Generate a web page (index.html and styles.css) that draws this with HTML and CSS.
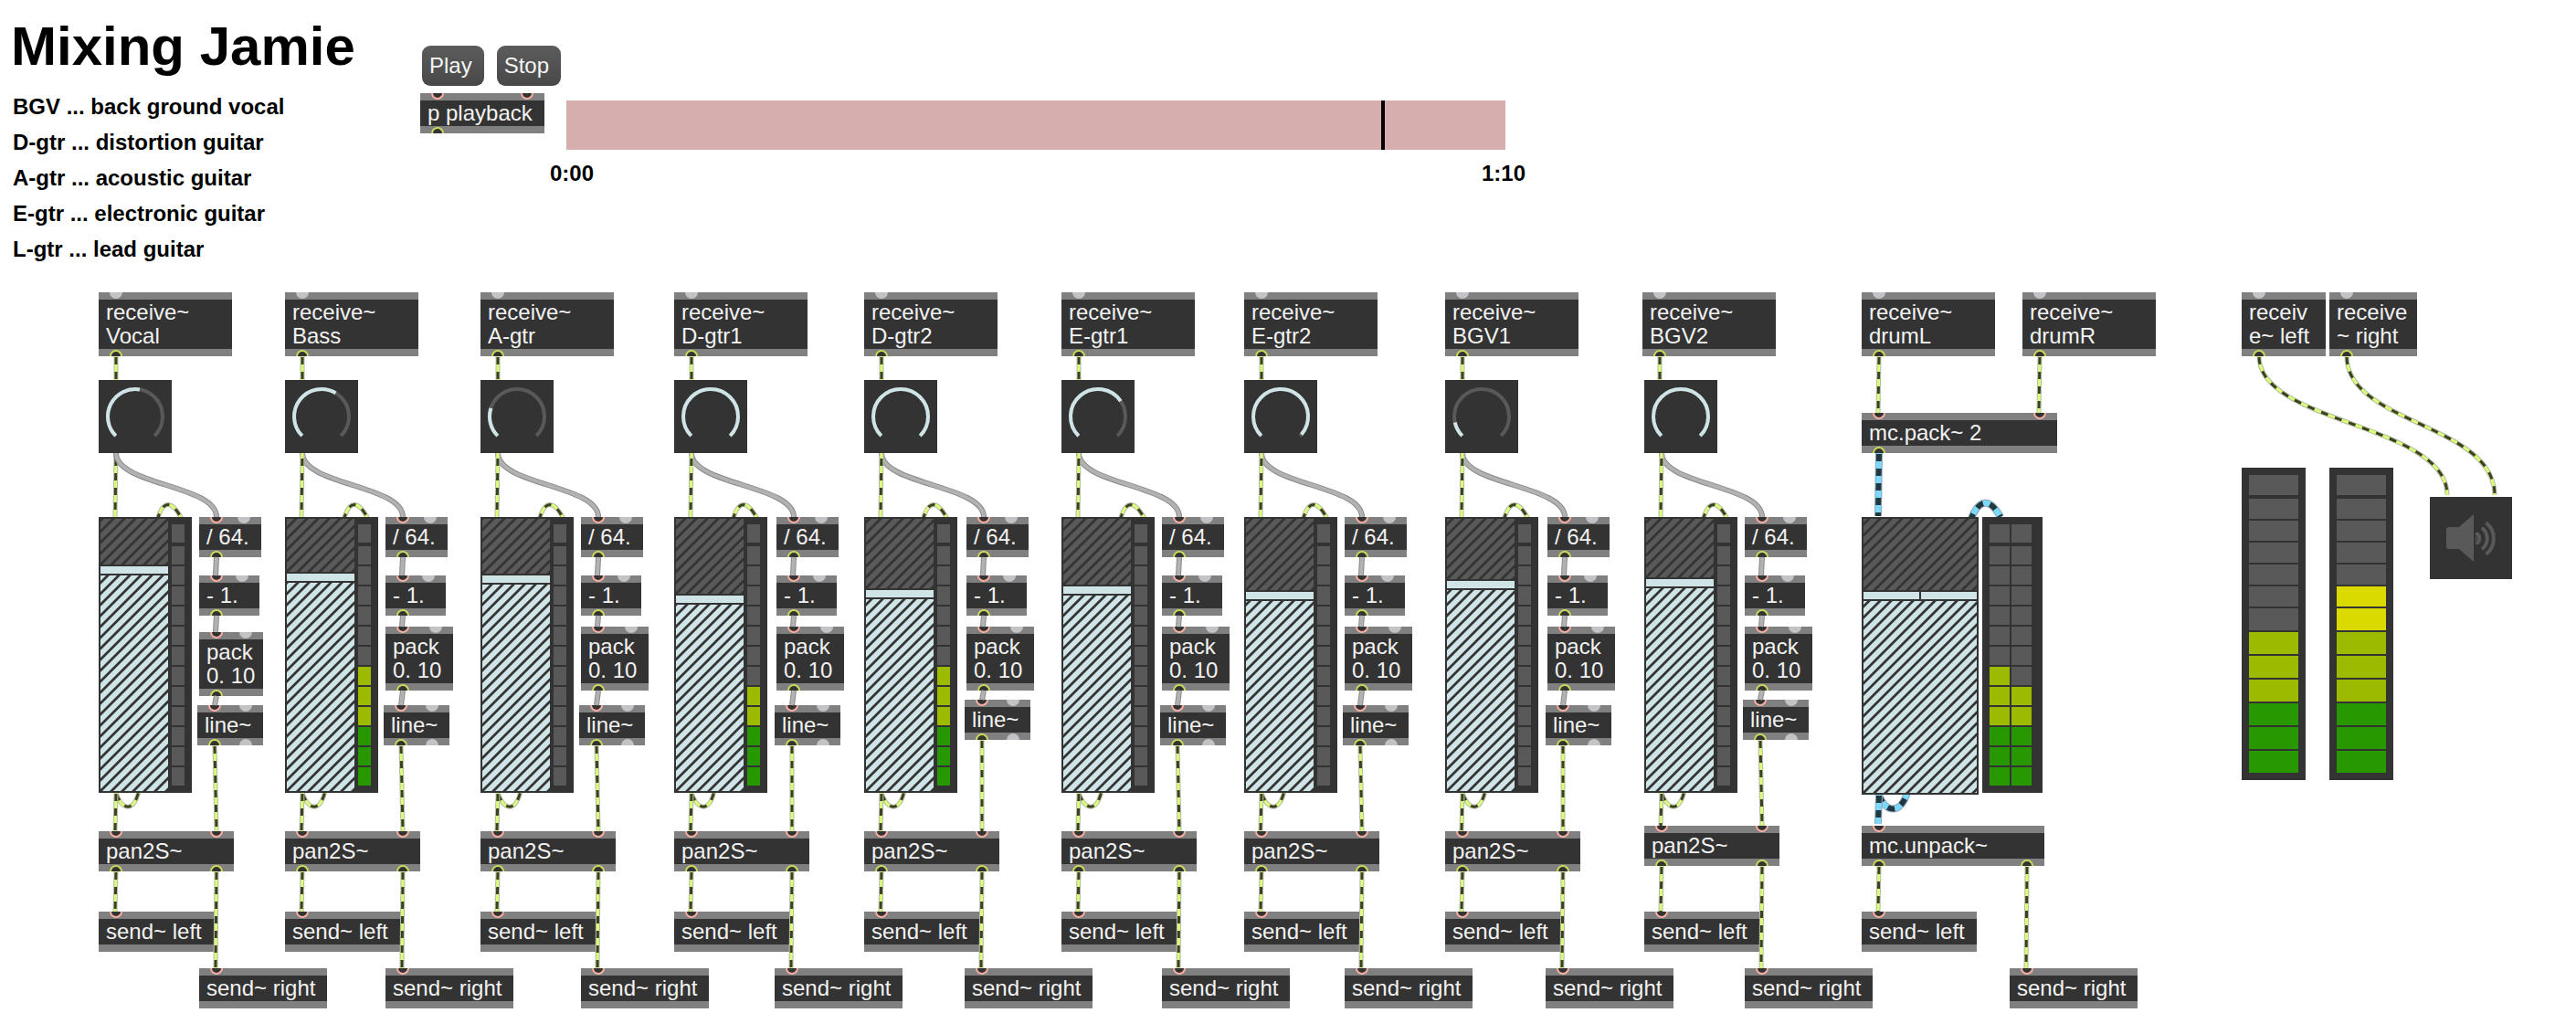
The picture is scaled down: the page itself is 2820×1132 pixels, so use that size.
FILE: index.html
```html
<!DOCTYPE html>
<html lang="en">
<head>
<meta charset="utf-8">
<title>Mixing Jamie</title>
<link rel="stylesheet" href="styles.css">
</head>
<body>
<header class="top">
  <div class="intro">
    <h1>Mixing Jamie</h1>
    <ul class="legend">
      <li>BGV ... back ground vocal</li>
      <li>D-gtr ... distortion guitar</li>
      <li>A-gtr ... acoustic guitar</li>
      <li>E-gtr ... electronic guitar</li>
      <li>L-gtr ... lead guitar</li>
    </ul>
  </div>
  <div class="transport">
    <div class="buttons">
      <button type="button" class="message">Play</button>
      <button type="button" class="message">Stop</button>
    </div>
    <div class="box">
      <i class="port in"></i><i class="port in last"></i>p playback<i class="port out"></i>
    </div>
  </div>
  <div class="timeline">
    <input class="position" type="range" min="0" max="1024" value="892" aria-label="Playback position">
    <div class="times"><span>0:00</span><span>1:10</span></div>
  </div>
</header>
<main class="patch" id="patch"></main>
<script src="patch.js"></script>
</body>
</html>
```
FILE: styles.css
```css
* { box-sizing: border-box; }

body {
  margin: 0;
  background: #fff;
  color: #000;
  font: 24px/26px "Liberation Sans", Arial, sans-serif;
}

/* Header */
.top { display: flex; align-items: flex-start; min-height: 320px; }
.intro { flex: 0 0 460px; padding: 17px 0 0 12px; }
h1 { margin: 0; font-size: 60px; line-height: 68px; }
.legend {
  margin: 12px 0 0;
  padding: 0 0 0 2px;
  list-style: none;
  font-weight: bold;
  line-height: 39px;
}
.transport { flex: 0 0 136px; min-width: 0; padding-top: 50px; }
.buttons { display: flex; gap: 14px; padding-left: 2px; margin-bottom: 8px; }
.message {
  flex: none;
  height: 44px;
  padding: 0 13px 0 8px;
  border: 0;
  border-radius: 9px;
  background: linear-gradient(#5c5c5c, #484848);
  color: #f5f5f5;
  font: inherit;
}
.timeline { flex: 0 1 1068px; margin-left: 6px; padding-top: 110px; }
.position {
  display: block;
  appearance: none;
  width: calc(100% - 40px);
  height: 54px;
  margin: 0 0 12px 18px;
  background: #d6aeae;
}
.position::-webkit-slider-thumb { appearance: none; width: 4px; height: 54px; background: #000; }
.times { display: flex; justify-content: space-between; font-weight: bold; line-height: 28px; }

/* Object boxes */
.box {
  position: relative;
  border: solid #808080;
  border-width: 8px 0;
  padding: 1px 8px;
  background: #333;
  color: #f2f2f2;
  white-space: nowrap;
}
.patch { position: relative; min-height: 812px; }
.patch > * { position: absolute; }

.port {
  position: absolute;
  left: 12px;
  width: 14px;
  height: 7px;
  background: #333;
}
.port.last { left: auto; right: 12px; }
.port.in { top: -8px; border: 2px solid #f7aea0; border-top: 0; border-radius: 0 0 7px 7px; }
.port.out { bottom: -8px; border: 2px solid #cdd958; border-bottom: 0; border-radius: 7px 7px 0 0; }
.port.idle { border-color: #c2c3c6; background: #c2c3c6; }

/* Patch cords */
.cords { top: 0; left: 0; width: 100%; height: 100%; z-index: 1; pointer-events: none; }
.cords path { fill: none; }
.edge { stroke: #b4b8ae; stroke-width: 5; }
.lime { stroke: #dbff75; stroke-width: 3; }
.lime-gap { stroke: #3a4122; stroke-width: 3; stroke-dasharray: 8; }
.mc-edge { stroke: #93a5ae; stroke-width: 8; }
.mc { stroke: #7dd8ff; stroke-width: 6; }
.mc-gap { stroke: #213840; stroke-width: 6; stroke-dasharray: 8; }
.control-edge { stroke: #898989; stroke-width: 6; }
.control { stroke: #b2b2b2; stroke-width: 4; }

/* Dials */
.dial { width: 80px; height: 80px; background: #333; z-index: 2; }
.dial svg { display: block; }
.dial path { fill: none; stroke: #595959; stroke-width: 4; }
.dial .value { stroke: #cfe4e7; }
.dial input { position: absolute; inset: 0; width: 100%; height: 100%; margin: 0; opacity: 0; }

/* Faders */
.fader {
  display: flex;
  flex-direction: column;
  width: 78px;
  height: 302px;
  border: 2px solid #333;
  z-index: 3;
}
.fader.wide { width: 128px; height: 304px; }
.hatch {
  background: linear-gradient(135deg, #333 5%, var(--tone) 11% 39%, #333 45% 55%, var(--tone) 61% 89%, #333 95%) left bottom / 12px 12px;
}
.above { --tone: #595959; }
.below { --tone: #cfe4e7; flex: 1; }
.fader input {
  position: absolute;
  inset: 0;
  appearance: none;
  width: 100%;
  height: 100%;
  margin: 0;
  background: none;
  writing-mode: vertical-lr;
  direction: rtl;
}
.fader input::-webkit-slider-thumb {
  appearance: none;
  width: 74px;
  height: 12px;
  border: solid #333;
  border-width: 2px 0;
  background: #cfe4e7;
}
.fader.wide input::-webkit-slider-thumb {
  width: 124px;
  background: linear-gradient(90deg, #cfe4e7 61px, #333 61px 63px, #cfe4e7 63px);
}

/* Level meters */
.meter {
  display: flex;
  gap: 2px;
  width: 30px;
  height: 302px;
  padding: 8px;
  background: #333;
  z-index: 2;
}
.meter.stereo { width: 66px; padding-right: 12px; }
.meter.main { width: 70px; height: 342px; }
.leds { flex: 1; display: flex; flex-direction: column; gap: 2px; }
.leds i { flex: 1; background: #595959; }
.leds i:first-child { margin-bottom: 2px; }
.main .leds i { flex: 0 0 24px; }
.main .leds i:nth-child(-n+6) { flex-basis: 22px; }
.leds .green { background: #289800; }
.leds .olive { background: #9cbb00; }
.leds .yellow { background: #dada00; }

/* Audio switch */
.speaker { width: 90px; height: 90px; padding: 0; border: 0; background: #333; }
.speaker svg { display: block; }
```
FILE: patch.js
```js
const patch = document.getElementById('patch');
const nodes = [];
const cords = [];

// ports: 'c' connected, 'i' idle; first sits at the left, second at the right
function ports(kind, spec) {
  return [...spec].map((p, n) =>
    `<i class="port ${kind}${n ? ' last' : ''}${p === 'i' ? ' idle' : ''}"></i>`).join('');
}
function box(x, y, w, text, ins, outs) {
  nodes.push(`<div class="box" style="left:${x}px;top:${y}px;width:${w}px">` +
    `${ports('in', ins)}${text}${ports('out', outs)}</div>`);
}
function signal(d, offset = -1) {
  cords.push(`<path class="edge" d="${d}"/><path class="lime" d="${d}"/>` +
    `<path class="lime-gap" stroke-dashoffset="${offset}" d="${d}"/>`);
}
function multi(d, offset = -1) {
  cords.push(`<path class="mc-edge" d="${d}"/><path class="mc" d="${d}"/>` +
    `<path class="mc-gap" stroke-dashoffset="${offset}" d="${d}"/>`);
}
function control(d) {
  cords.push(`<path class="control-edge" d="${d}"/><path class="control" d="${d}"/>`);
}
function arc(fraction) {
  const at = f => {
    const a = (-225 + 270 * f) * Math.PI / 180;
    return `${(40 + 30 * Math.cos(a)).toFixed(2)} ${(40 + 30 * Math.sin(a)).toFixed(2)}`;
  };
  return `M${at(0)}A30 30 0 ${fraction > 0.667 ? 1 : 0} 1 ${at(fraction)}`;
}
function dial(x, y, value, name) {
  nodes.push(`<div class="dial" style="left:${x}px;top:${y}px">` +
    `<svg width="80" height="80" aria-hidden="true"><path d="${arc(1)}"/><path class="value" d="${arc(value)}"/></svg>` +
    `<input type="range" min="0" max="127" value="${Math.round(value * 127)}" aria-label="${name} pan"></div>`);
}
function fader(x, y, above, name, wide) {
  const max = wide ? 288 : 286;
  nodes.push(`<div class="fader${wide ? ' wide' : ''}" style="left:${x}px;top:${y}px">` +
    `<div class="hatch above" style="height:${above}px"></div><div class="hatch below"></div>` +
    `<input type="range" min="0" max="${max}" value="${max - above}" aria-label="${name} gain"></div>`);
}
function leds(level) {
  let out = '';
  for (let n = 12; n >= 0; n--) {
    const tone = n >= level ? '' : n < 3 ? 'green' : n < 6 ? 'olive' : 'yellow';
    out += `<i${tone ? ` class="${tone}"` : ''}></i>`;
  }
  return `<div class="leds">${out}</div>`;
}
function meter(x, y, levels, kind = '') {
  nodes.push(`<div class="meter ${kind}" style="left:${x}px;top:${y}px">${levels.map(leds).join('')}</div>`);
}

const channels = [
  { name: 'Vocal', x: 108, pan: 0.535, above: 50, level: 0, pack: [372, 70], controlOnTop: true },
  { name: 'Bass', x: 312, pan: 0.615, above: 58, level: 6 },
  { name: 'A-gtr', x: 526, pan: 0.233, above: 60, level: 0 },
  { name: 'D-gtr1', x: 738, pan: 1, above: 82, level: 5, side: 112 },
  { name: 'D-gtr2', x: 946, pan: 1, above: 76, level: 6, side: 112, line: 446 },
  { name: 'E-gtr1', x: 1162, pan: 0.707, above: 72, level: 0 },
  { name: 'E-gtr2', x: 1362, pan: 0.985, above: 78, level: 0 },
  { name: 'BGV1', x: 1582, pan: 0.12, above: 66, level: 0, side: 112 },
  { name: 'BGV2', x: 1800, pan: 1, above: 64, level: 0, receive: 1798, side: 112, line: 446, mix: 584 }
];

for (const c of channels) {
  const { x } = c;
  const rx = c.receive || x;
  const side = rx + (c.side || 110);
  const lineX = side - 2;
  const [packY, packW] = c.pack || [366, 74];
  const lineY = c.line || 452;
  const mixY = c.mix || 590;
  const a = x + 19;
  const b = side + 19;
  const r = x + 129;

  box(rx, 0, 146, `receive~<br>${c.name}`, 'i', 'c');
  dial(x, 96, c.pan, c.name);
  meter(x + 72, 246, [c.level]);
  fader(x, 246, c.above, c.name);
  box(side, 246, 68, '/ 64.', 'ci', 'c');
  box(side, 310, 66, '- 1.', 'ci', 'c');
  box(side, packY, packW, 'pack<br>0. 10', 'ci', 'c');
  box(lineX, lineY, 72, 'line~', 'ci', 'ci');
  box(x, mixY, 148, 'pan2S~', 'cc', 'cc');
  box(x, 678, 126, 'send~ left', 'c', '');
  box(x + 110, 740, 140, 'send~ right', 'c', '');

  const toScale = `M${a} 176C${a} 211 ${b} 211 ${b} 246`;
  signal(`M${rx + 19} 70V96`);
  if (!c.controlOnTop) control(toScale);
  signal(`M${a} 176L${a - 1} 246`, -6);
  if (c.controlOnTop) control(toScale);
  signal(`M${x + 64} 250C${x + 70} 227 ${x + 80} 227 ${x + 91} 248`, 0);
  control(`M${b} 290L${b - 1} 310`);
  control(`M${b} 354L${b - 1} ${packY}`);
  control(`M${b} ${packY + 70}L${b - 2} ${lineY}`);
  signal(`M${a} 548C${a + 6} 566 ${a + 19} 571 ${a + 25} 546`);
  signal(`M${a} 548L${a - 1} ${mixY}`);
  signal(`M${lineX + 19} ${lineY + 44}L${r} ${mixY}`);
  signal(`M${a} ${mixY + 44}L${a - 1} 678`);
  signal(`M${r} ${mixY + 44}L${r - 1} 740`);
}

// Drum bus
box(2038, 0, 146, 'receive~<br>drumL', 'i', 'c');
box(2214, 0, 146, 'receive~<br>drumR', 'i', 'c');
box(2038, 132, 214, 'mc.pack~ 2', 'cc', 'c');
meter(2170, 246, [6, 5], 'stereo');
fader(2038, 246, 78, 'Drums', true);
box(2038, 584, 200, 'mc.unpack~', 'c', 'cc');
box(2038, 678, 126, 'send~ left', 'c', '');
box(2200, 740, 140, 'send~ right', 'c', '');
signal('M2057 70L2056 132');
signal('M2233 70L2232 132');
multi('M2057 176L2056 245');
multi('M2157 250C2166 226 2178 224 2190 246', 0);
multi('M2057 550C2064 570 2080 572 2088 548');
multi('M2057 550L2056 582');
signal('M2057 628L2056 678');
signal('M2219 628L2218 740');

// Main output
box(2454, 0, 92, 'receiv<br>e~ left', 'i', 'c');
box(2550, 0, 96, 'receive<br>~ right', 'i', 'c');
meter(2454, 192, [6], 'main');
meter(2550, 192, [8], 'main');
nodes.push('<button type="button" class="speaker" aria-label="Audio on/off" style="left:2660px;top:224px">' +
  '<svg width="90" height="90" aria-hidden="true"><g fill="#595959">' +
  '<path d="M21 33h11L48 19v52L32 57H21a3 3 0 0 1-3-3V36a3 3 0 0 1 3-3z"/>' +
  '<path d="M50 39h3.500a9 9 0 0 1 0 13H50z"/></g>' +
  '<path d="M50 42a5 5 0 0 1 0 8" fill="none" stroke="#333" stroke-width="1"/>' +
  '<g fill="none" stroke="#595959" stroke-width="4">' +
  '<path d="M57 33.700a15 15 0 0 1 0 23.600"/><path d="M61.500 28.200a22 22 0 0 1 0 34.600"/></g></svg></button>');
signal('M2473 70C2473 144 2679 144 2679 222');
signal('M2569 70C2569 144 2731 144 2731 222');

patch.innerHTML = nodes.join('') + `<svg class="cords" aria-hidden="true">${cords.join('')}</svg>`;
```
